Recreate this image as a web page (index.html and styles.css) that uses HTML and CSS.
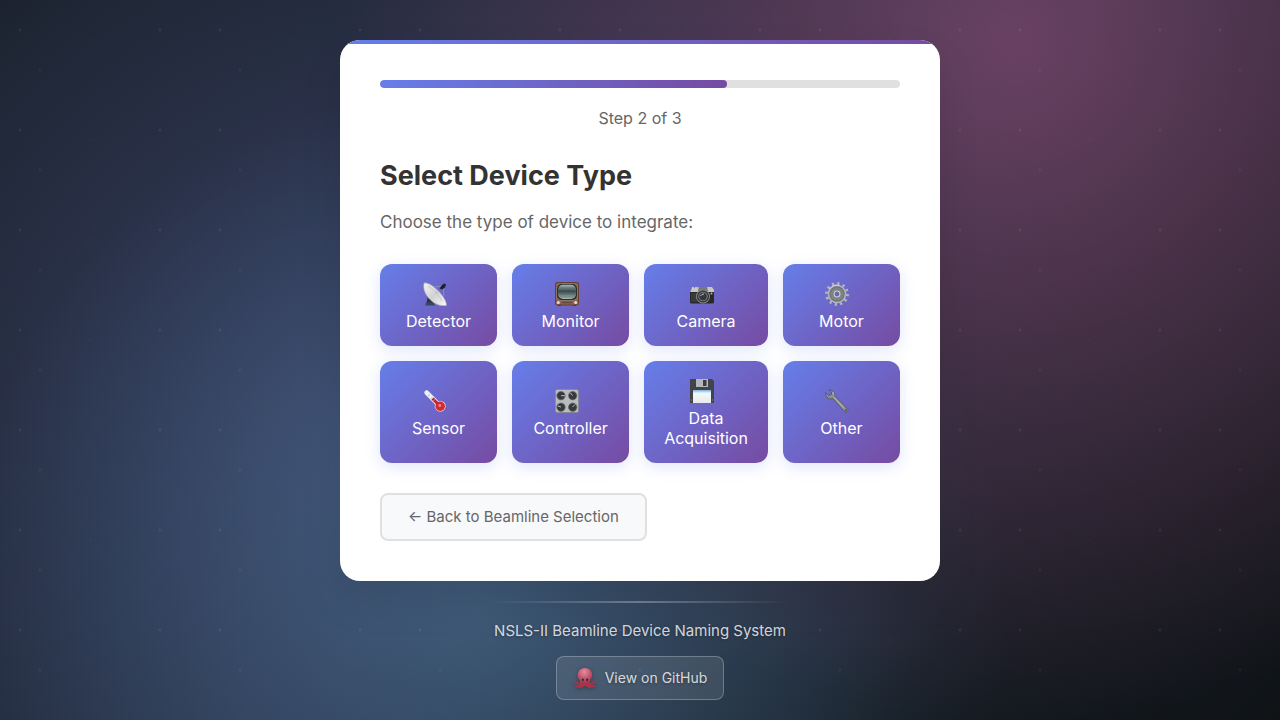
FILE: index.html
```html
<!DOCTYPE html>
<html lang="en">
<head>
<meta charset="utf-8">
<meta name="viewport" content="width=device-width, initial-scale=1">
<title>NSLS-II Beamline Device Naming System</title>
<link rel="stylesheet" href="styles.css">
</head>
<body>
<div class="page">
  <main class="card">
    <div class="progress" role="progressbar" aria-label="Progress" aria-valuemin="0" aria-valuemax="3" aria-valuenow="2">
      <div class="progress-fill" style="width: 66.67%"></div>
    </div>
    <p class="step">Step 2 of 3</p>
    <h1 class="title">Select Device Type</h1>
    <p class="lead">Choose the type of device to integrate:</p>
    <div class="devices">
      <button class="device" type="button">
        <svg class="icon" viewBox="0 0 24 24" aria-hidden="true">
          <defs><linearGradient id="dish" x1="0" y1="0" x2="1" y2="1"><stop offset="0" stop-color="#f4f4f4"/><stop offset=".5" stop-color="#d2d2d4"/><stop offset="1" stop-color="#f8f8f8"/></linearGradient></defs>
          <path d="M5 13l6 3-1 5H3.500z" fill="#2d333d"/>
          <path d="M2.500 21.500q4-3 9 0v2h-9z" fill="#34485e"/>
          <path d="M11 5l9-1M21 14L20 4" stroke="#aeb0b5" stroke-width=".5" fill="none"/>
          <path d="M1 1C7-1 24 15 23.500 23.500 12 26-2 12 1 1z" fill="url(#dish)" stroke="#9a9ba0" stroke-width=".6"/>
          <path d="M5 4q9 5 14 15M12 12l4-3" stroke="#b8b8bc" stroke-width=".6" fill="none"/>
          <path d="M16.500 6.500L19 3l2.500-1.500 1.500 1-1 3-3 2z" fill="#202126"/>
        </svg>
        <span>Detector</span>
      </button>
      <button class="device" type="button">
        <svg class="icon" viewBox="0 0 24 24" aria-hidden="true">
          <defs><linearGradient id="tube" x1="0" y1="0" x2="0" y2="1"><stop offset="0" stop-color="#a3b5b5"/><stop offset=".45" stop-color="#3c4b4e"/><stop offset="1" stop-color="#a5b8b4"/></linearGradient></defs>
          <path d="M3 22h3v2H3zm15 0h3v2h-3z" fill="#4a2d22"/>
          <rect x=".5" y=".5" width="23" height="22.500" rx="1.500" fill="#8d6350" stroke="#65402f"/>
          <rect x="1.600" y="1.600" width="20.800" height="16.800" rx="5" fill="#24282b" stroke="#c9b09b" stroke-width=".5"/>
          <rect x="3" y="2.800" width="18" height="14.200" rx="5" fill="url(#tube)"/>
          <path d="M4 6h16M4 9h16M4 12h16M5 15h14" stroke="#2c383b" stroke-width=".5" opacity=".4"/>
          <circle cx="3.300" cy="20.500" r="1.500" fill="#e6dbc9"/><circle cx="20.700" cy="20.500" r="1.500" fill="#e6dbc9"/>
          <path d="M7 20.500h10" stroke="#64483c" stroke-width="1.500"/>
        </svg>
        <span>Monitor</span>
      </button>
      <button class="device" type="button">
        <svg class="icon" viewBox="0 0 24 24" aria-hidden="true">
          <path d="M1 8l1-2h4l2-1h14l2 3v3H0z" fill="#c6c6c3"/>
          <path d="M2 6.500V5h2v1.500m1 0V5h2v1.500" fill="#e5e5e5" stroke="#96979a" stroke-width=".5"/>
          <path d="M9 5h8l1 4H8z" fill="#77797b"/>
          <path d="M0 10h24v10q0 1.500-1.500 1.500h-21Q0 21.500 0 20z" fill="#29292a"/>
          <path d="M1 11h6v9H1z" fill="#393a3a"/>
          <circle cx="13" cy="14.500" r="7" fill="#85888a"/><circle cx="13" cy="14.500" r="6" fill="#2d2f31"/>
          <circle cx="13" cy="14.500" r="4.800" fill="#777c80"/><circle cx="13" cy="14.500" r="3.700" fill="#33373c"/>
          <path d="M10.500 14q1-2 3.500-2" stroke="#c7cfd4" stroke-width=".9" fill="none"/><circle cx="21.500" cy="11.500" r="1" fill="#e4b82b"/>
        </svg>
        <span>Camera</span>
      </button>
      <button class="device" type="button">
        <svg class="icon" viewBox="0 0 24 24" aria-hidden="true">
          <circle cx="12" cy="12" r="10.500" fill="none" stroke="#b5b7b9" stroke-width="2.800" stroke-dasharray="2.200 3.298"/>
          <circle cx="12" cy="12" r="9.300" fill="#b3b6b8"/>
          <circle cx="12" cy="12" r="7.700" fill="#686c70"/>
          <circle cx="12" cy="12" r="6.700" fill="#7f8488"/>
          <circle cx="12" cy="12" r="4" fill="#d4d6d9" stroke="#606469" stroke-width=".6"/>
          <circle cx="12" cy="12" r="2.200" fill="#6b66c0" stroke="#676b72" stroke-width=".6"/>
          <path d="M4.500 7q4-5.500 10-3.500" stroke="#e1e2e3" stroke-width=".8" fill="none"/>
        </svg>
        <span>Motor</span>
      </button>
      <button class="device" type="button">
        <svg class="icon" viewBox="0 0 24 24" aria-hidden="true">
          <path d="M3.700 3.700L17 17" stroke="#c9c5da" stroke-width="5" stroke-linecap="round"/>
          <path d="M3.700 3.700L17 17" stroke="#edf1f2" stroke-width="4" stroke-linecap="round"/>
          <circle cx="17.200" cy="17.200" r="5.500" fill="#e8c8ca"/>
          <path d="M9.500 9.500l7 7" stroke="#bb242b" stroke-width="3"/>
          <circle cx="17.200" cy="17.200" r="4.700" fill="#d32930"/>
          <circle cx="16.800" cy="16.500" r="1.400" fill="#f38b8b"/>
          <path d="M5 7l2-1.500M7.500 9.500l2-1.500M10 12l2-1.500" stroke="#9b9fa9" stroke-width=".6"/>
        </svg>
        <span>Sensor</span>
      </button>
      <button class="device" type="button">
        <svg class="icon" viewBox="0 0 24 24" aria-hidden="true">
          <rect x=".4" y=".4" width="23.200" height="23.200" rx="2" fill="#b9bbbd" stroke="#85878c" stroke-width=".8"/>
          <g fill="#36393c" stroke="#6d7073" stroke-width=".8"><circle cx="6" cy="6.700" r="4.200"/><circle cx="17.700" cy="6.700" r="4.200"/><circle cx="6" cy="18.200" r="4.200"/><circle cx="17.700" cy="18.200" r="4.200"/></g>
          <path d="M6 6.700h4M17.500 6.500L15.500 4M6 18l-3-1M17.500 18l2.500-2.500" stroke="#c9cbcd" stroke-width=".9"/>
        </svg>
        <span>Controller</span>
      </button>
      <button class="device" type="button">
        <svg class="icon" viewBox="0 0 24 24" aria-hidden="true">
          <defs><linearGradient id="label" x1="0" y1="0" x2="0" y2="1"><stop offset="0" stop-color="#74b0e5"/><stop offset=".25" stop-color="#f5f8fa"/><stop offset="1" stop-color="#e8e9eb"/></linearGradient></defs>
          <path d="M0 0h22l2 2v22H0z" fill="#424448"/>
          <path d="M6 0h12v8H6z" fill="#b5b7ba"/><path d="M13 1h3.500v6H13z" fill="#3b3d41"/>
          <path d="M3 11h18v13H3z" fill="url(#label)"/><path d="M1 21h1m20 0h1" stroke="#888" stroke-width="1"/>
        </svg>
        <span>Data Acquisition</span>
      </button>
      <button class="device" type="button">
        <svg class="icon" viewBox="0 0 24 24" aria-hidden="true">
          <path d="M4 .8l3 .7Q10 3 9.500 6.500L22.500 20q1.200 1.500-.2 2.800t-3-.2L8 9.500Q3 11 .8 6.500l-.3-3L3.500 6.500 6.500 5.500 6.300 3z" fill="#8b9094" stroke="#50545b" stroke-width=".8" stroke-linejoin="round"/>
          <path d="M9 8.500l9.500 10M8 3l.8 3" stroke="#c5c8cc" stroke-width=".8" fill="none"/>
          <circle cx="20.800" cy="21.300" r="1" fill="#4b4366"/>
        </svg>
        <span>Other</span>
      </button>
    </div>
    <button class="back" type="button">← Back to Beamline Selection</button>
  </main>
  <footer class="footer">
    <p class="system">NSLS-II Beamline Device Naming System</p>
    <a class="github" href="#">
      <svg class="octopus" viewBox="0 0 24 24" aria-hidden="true">
        <defs><radialGradient id="head" cx=".45" cy=".25" r=".7"><stop offset="0" stop-color="#df8e9e"/><stop offset=".6" stop-color="#c2566c"/><stop offset="1" stop-color="#9c384d"/></radialGradient></defs>
        <path d="M7 18Q4 19 1.500 15.500M8 19q-3 3-6.500 1.500M10 19q-1 3-4 3M17 18q3 1 5.500-2.500M16 19q3 3 6.500 1.500M14 19q1 3 4 3" fill="none" stroke="#ad3247" stroke-width="2" stroke-linecap="round"/>
        <path d="M7 15h10l1 5-4 1.500-2-1-2 1L6 20z" fill="#ad3247"/>
        <path d="M12 1C7 1 4 4.500 4 9c0 3 2 4.500 3 8 1 2 9 2 10 0 1-3.500 3-5 3-8 0-4.500-3-8-8-8z" fill="url(#head)"/>
        <ellipse cx="9.700" cy="14" rx="1.100" ry="1.500" fill="#352531"/><ellipse cx="14.300" cy="14" rx="1.100" ry="1.500" fill="#352531"/>
      </svg>
      <span>View on GitHub</span>
    </a>
  </footer>
</div>
</body>
</html>
```
FILE: styles.css
```css
* { box-sizing: border-box; }

body {
  margin: 0;
  font-family: Inter, "Liberation Sans", sans-serif;
  font-size: 16px;
  line-height: 20px;
  color: #333;
}

.page {
  min-height: 100vh;
  padding: 40px 20px 20px;
  background:
    radial-gradient(2px 2px at 20px 30px, rgba(255, 255, 255, .1), transparent) 0 0 / 200px 100px,
    radial-gradient(2px 2px at 40px 70px, rgba(255, 255, 255, .08), transparent) 0 0 / 200px 100px,
    radial-gradient(1px 1px at 90px 40px, rgba(255, 255, 255, .08), transparent) 0 0 / 200px 100px,
    radial-gradient(1px 1px at 130px 80px, rgba(255, 255, 255, .04), transparent) 0 0 / 200px 100px,
    radial-gradient(2px 2px at 160px 30px, rgba(255, 255, 255, .1), transparent) 0 0 / 200px 100px,
    radial-gradient(circle 680px at 1020px 45px, rgba(255, 119, 188, .33), transparent),
    radial-gradient(circle 530px at 480px 610px, rgba(110, 205, 235, .22), transparent),
    radial-gradient(circle 600px at 370px 440px, rgba(120, 129, 218, .3), transparent),
    linear-gradient(135deg, #1b222d 0%, #202838 50%, #0f1316 100%);
}

.card {
  position: relative;
  max-width: 600px;
  margin: 0 auto;
  padding: 40px;
  overflow: hidden;
  border-radius: 20px;
  background: #fff;
  box-shadow: 0 20px 40px rgba(0, 0, 0, .1);
}

.card::before {
  content: "";
  position: absolute;
  inset: 0 0 auto;
  height: 4px;
  background: linear-gradient(90deg, #667eea, #764ba2);
}

.progress {
  height: 8px;
  margin-bottom: 20px;
  overflow: hidden;
  border-radius: 4px;
  background: #e0e0e0;
}

.progress-fill {
  height: 100%;
  border-radius: 4px;
  background: linear-gradient(90deg, #667eea, #764ba2);
}

.step {
  margin: 0 0 30px;
  text-align: center;
  color: #666;
}

.title {
  margin: 0 0 16px;
  font-size: 27px;
  line-height: 36px;
  font-weight: 700;
}

.lead {
  margin: 0 0 30px;
  font-size: 17px;
  line-height: 24px;
  color: #666;
}

.devices {
  display: grid;
  grid-template-columns: repeat(4, 1fr);
  gap: 15px;
  margin-bottom: 30px;
}

.device {
  display: flex;
  flex-direction: column;
  align-items: center;
  justify-content: center;
  padding: 15px 20px;
  border: 0;
  border-radius: 12px;
  background: linear-gradient(135deg, #667eea, #764ba2);
  box-shadow: 0 4px 15px rgba(102, 126, 234, .2);
  color: #fff;
  font: inherit;
  cursor: pointer;
}

.icon {
  width: 24px;
  height: 24px;
  margin: 3px 8px 5px 0;
}

.back {
  padding: 12px 26px;
  border: 2px solid #e0e0e0;
  border-radius: 8px;
  background: #f8f9fa;
  color: #666;
  font: inherit;
  font-size: 15px;
  line-height: 20px;
  cursor: pointer;
}

.footer {
  display: flex;
  flex-direction: column;
  align-items: center;
  padding-top: 20px;
  color: rgba(255, 255, 255, .8);
  text-shadow: 0 1px 3px rgba(0, 0, 0, .3);
}

.footer::before {
  content: "";
  width: 300px;
  max-width: 100%;
  height: 2px;
  margin-bottom: 18px;
  background: linear-gradient(90deg, transparent, rgba(255, 255, 255, .3), transparent);
}

.system {
  margin: 0 0 15px;
  font-size: 15px;
}

.github {
  display: flex;
  align-items: center;
  gap: 8px;
  padding: 10px 16px;
  border: 1px solid rgba(255, 255, 255, .25);
  border-radius: 8px;
  background: rgba(255, 255, 255, .1);
  color: inherit;
  font-size: 14px;
  line-height: 22px;
  text-decoration: none;
}

.octopus {
  width: 24px;
  height: 22px;
  filter: drop-shadow(0 1px 2px rgba(0, 0, 0, .3));
}
```
